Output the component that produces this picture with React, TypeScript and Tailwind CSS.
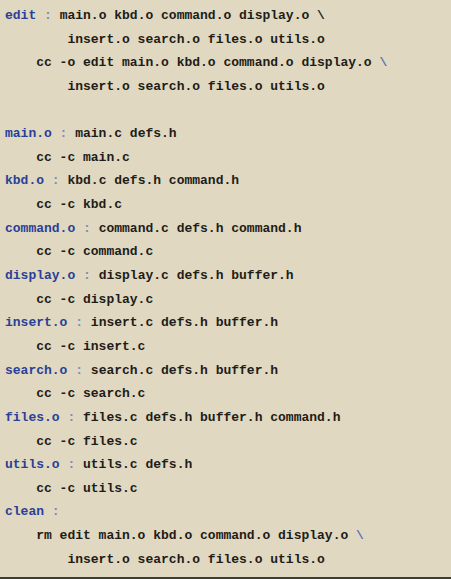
const lines: [string, string][] = [
  ["edit", "main.o kbd.o command.o display.o \\"],
  ["", "        insert.o search.o files.o utils.o"],
  ["", "    cc -o edit main.o kbd.o command.o display.o @"],
  ["", "        insert.o search.o files.o utils.o"],
  ["", ""],
  ["main.o", "main.c defs.h"],
  ["", "    cc -c main.c"],
  ["kbd.o", "kbd.c defs.h command.h"],
  ["", "    cc -c kbd.c"],
  ["command.o", "command.c defs.h command.h"],
  ["", "    cc -c command.c"],
  ["display.o", "display.c defs.h buffer.h"],
  ["", "    cc -c display.c"],
  ["insert.o", "insert.c defs.h buffer.h"],
  ["", "    cc -c insert.c"],
  ["search.o", "search.c defs.h buffer.h"],
  ["", "    cc -c search.c"],
  ["files.o", "files.c defs.h buffer.h command.h"],
  ["", "    cc -c files.c"],
  ["utils.o", "utils.c defs.h"],
  ["", "    cc -c utils.c"],
  ["clean", ""],
  ["", "    rm edit main.o kbd.o command.o display.o @"],
  ["", "        insert.o search.o files.o utils.o"],
];

function Line({ target, rest }: { target: string; rest: string }) {
  // "@" marks a continuation backslash drawn in blue
  const blueSlash = rest.endsWith("@");
  const body = blueSlash ? rest.slice(0, -1) : rest;
  return (
    <div className="h-[23.65px] whitespace-pre">
      {target && (
        <>
          <span className="text-[#2a3f98]">{target}</span>
          <span className="text-[#7d8dba]"> : </span>
        </>
      )}
      <span>{body}</span>
      {blueSlash && <span className="text-[#5a74b4]">\</span>}
    </div>
  );
}

export default function App() {
  return (
    <div className="w-[451px] h-[579px] bg-[#e0d8c0] border-b-[2px] border-[#3c3b35] overflow-hidden">
      <div className="pt-[4px] pl-[5px] font-['Liberation_Mono',monospace] text-[13px] leading-[23.65px] font-bold text-[#1e1c18]">
        {lines.map(([t, r], i) => (
          <Line key={i} target={t} rest={r} />
        ))}
      </div>
    </div>
  );
}
